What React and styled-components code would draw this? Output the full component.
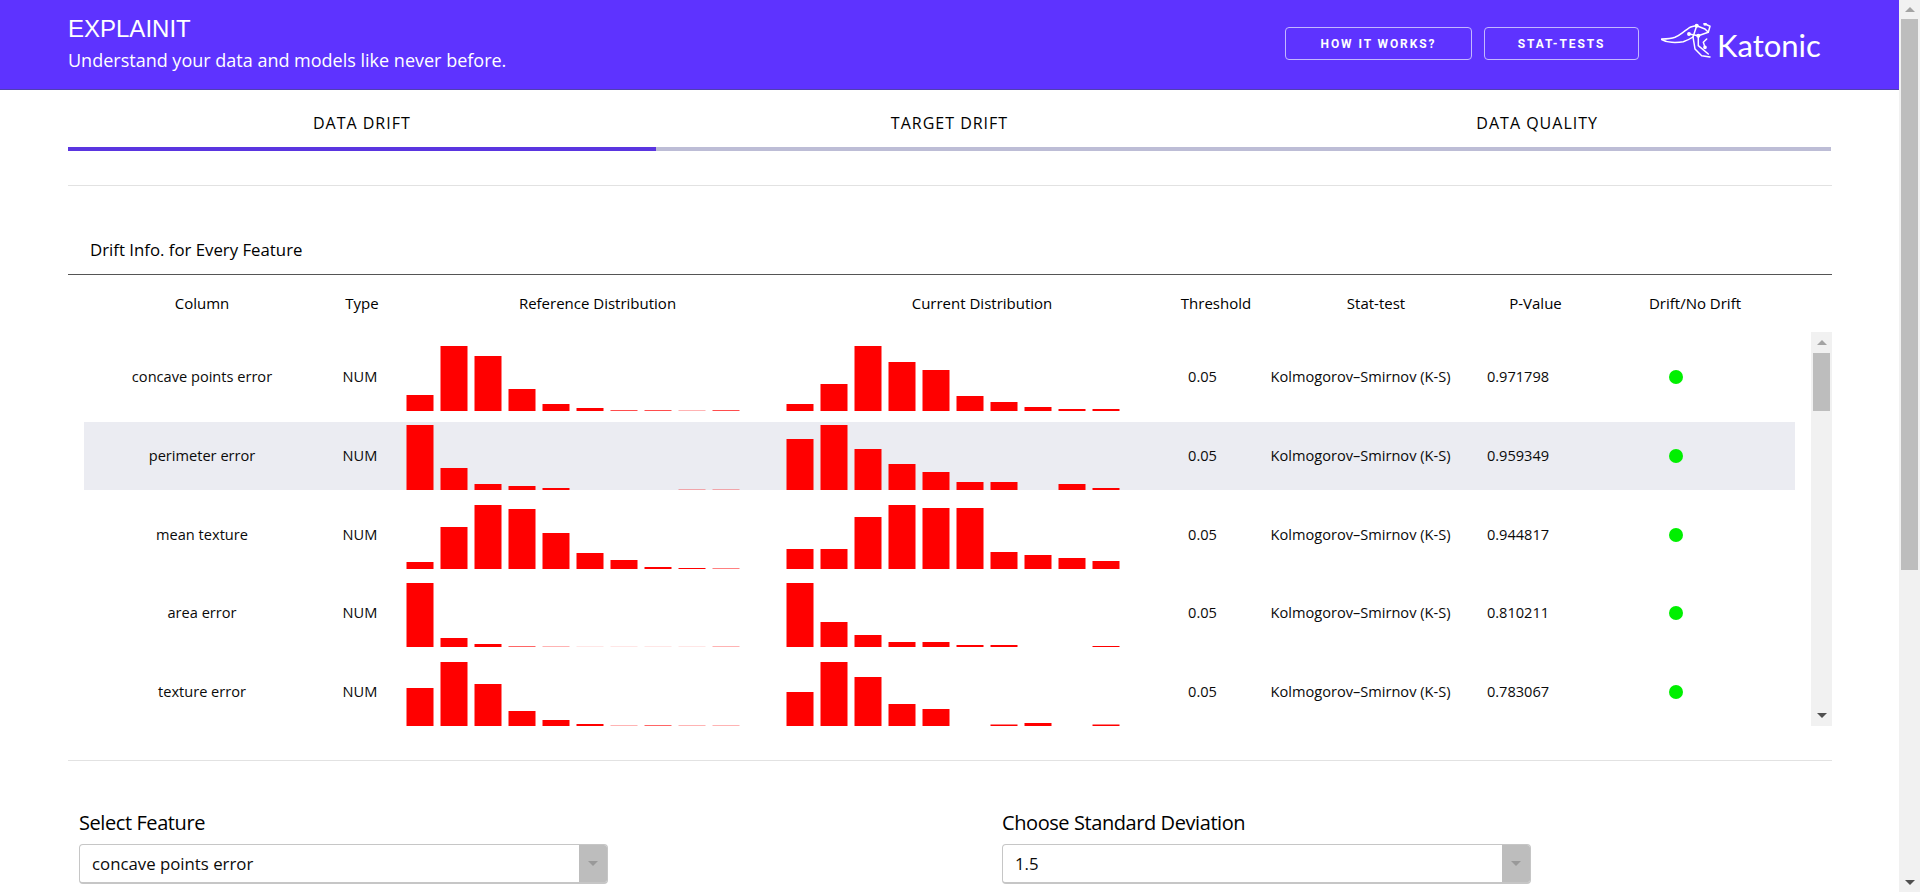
import React from "react";
import styled, { createGlobalStyle } from "styled-components";

const Global = createGlobalStyle`
  html, body { margin: 0; padding: 0; height: 100%; overflow: hidden; background: #fff; }
  * { box-sizing: border-box; }
`;

const sans = `"Open Sans", "Noto Sans", sans-serif`;
const ink = "#0a0a0a";

const Page = styled.div`
  display: flex;
  height: 892px;
  overflow: hidden;
  font-family: ${sans};
  color: ${ink};
`;
const Main = styled.main`
  flex: 1;
  min-width: 0;
`;
const Banner = styled.header`
  display: flex;
  align-items: flex-start;
  justify-content: space-between;
  height: 90px;
  padding: 0 77px 0 68px;
  background: #5e33ff;
  border-bottom: 1px solid #5040b0;
  color: #fff;
`;
const BrandText = styled.div`
  padding-top: 15px;
`;
const BrandTitle = styled.h1`
  margin: 0;
  font: 400 24px/28px "Liberation Sans", Arial, sans-serif;
`;
const BrandSub = styled.p`
  margin: 5px 0 0;
  font: 400 18px/25px ${sans};
`;
const Actions = styled.div`
  display: flex;
  align-items: flex-start;
  padding-top: 23px;
`;
const Outline = styled.button`
  width: ${(p) => p.$w}px;
  height: 33px;
  margin: 4px 12px 0 0;
  padding: 0;
  background: transparent;
  border: 1px solid #c4b8ff;
  border-radius: 4px;
  color: #fff;
  font: 700 12px/1 Roboto, "Liberation Sans", sans-serif;
  letter-spacing: 1.9px;
`;
const Logo = styled.div`
  display: flex;
  align-items: flex-start;
  width: 162px;
  height: 35px;
  margin-left: 9px;
`;
const LogoWord = styled.span`
  margin: 7px 0 0 1px;
  font: 400 31px/30px Lato, sans-serif;
  color: #fff;
`;
const Body = styled.div`
  padding: 0 67px 0 68px;
`;
const Tabs = styled.nav`
  display: grid;
  grid-template-columns: repeat(3, 1fr);
  margin-right: 1px;
`;
const Tab = styled.div`
  height: 61px;
  padding-top: 22px;
  text-align: center;
  border-bottom: 4px solid ${(p) => (p.$active ? "#5a35e0" : "#bdbdd6")};
  font: 400 16px/22px ${sans};
  letter-spacing: 1px;
  color: #000;
`;
const Rule = styled.hr`
  height: 1px;
  margin: ${(p) => p.$m};
  border: 0;
  background: #e2e2e2;
`;
const SectionTitle = styled.h2`
  margin: 0;
  padding: 53px 0 13px 22px;
  border-bottom: 1px solid #555;
  font: 500 16.8px/22px ${sans};
  color: #000;
`;
const HeadRow = styled.div`
  display: grid;
  grid-template-columns: 268px 52px 419px 350px 118px 202px 117px 202px;
  justify-items: center;
  padding-top: 18px;
  height: 57px;
  font: 500 15px/20px ${sans};
  color: #000;
`;
const HeadCell = styled.div`
  white-space: nowrap;
`;
const Scroller = styled.div`
  display: flex;
  height: 394px;
  padding-left: 16px;
`;
const RowList = styled.div`
  width: 1711px;
  padding-top: 11px;
`;
const Row = styled.div`
  display: grid;
  grid-template-columns: 236px 80px 6px 380px 380px 73px 243px 72px 241px;
  align-items: center;
  justify-items: center;
  height: 68px;
  margin-bottom: 10.75px;
  background: ${(p) => (p.$shaded ? "#ebecf2" : "transparent")};
  font: 400 14.6px/20px ${sans};
`;
const Cell = styled.div`
  padding-bottom: 2px;
  white-space: nowrap;
`;
const ChartCell = styled.div`
  justify-self: start;
  align-self: end;
  display: flex;
`;
const Dot = styled.span`
  display: block;
  width: 14px;
  height: 14px;
  margin-left: 3px;
  border-radius: 50%;
  background: #00f000;
`;
const Track = styled.div`
  display: flex;
  flex-direction: column;
  width: 21px;
  height: ${(p) => p.$h};
  margin-left: ${(p) => p.$ml || 0};
  background: #f1f1f1;
`;
const Thumb = styled.div`
  height: ${(p) => p.$h}px;
  margin: 0 2px;
  background: #bdbdbd;
`;
const ArrowBox = styled.div`
  display: flex;
  align-items: center;
  justify-content: center;
  height: ${(p) => p.$h}px;
  margin-top: ${(p) => (p.$end ? "auto" : 0)};
`;
const Triangle = styled.span`
  width: 0;
  height: 0;
  border-left: 5px solid transparent;
  border-right: 5px solid transparent;
  ${(p) => (p.$up ? "border-bottom" : "border-top")}: 5px solid ${(p) => p.$c};
`;
const Controls = styled.div`
  display: grid;
  grid-template-columns: 529px 529px;
  column-gap: 394px;
  padding: 48px 0 0 11px;
`;
const Label = styled.label`
  display: block;
  font: 500 20px/27px ${sans};
  letter-spacing: -0.42px;
  color: #000;
`;
const SelectBox = styled.div`
  display: flex;
  align-items: stretch;
  height: 40px;
  margin-top: 8px;
  border: 1px solid #c6c6c6;
  border-bottom-width: 2px;
  border-radius: 4px;
  overflow: hidden;
  font: 400 16.8px/37px ${sans};
`;
const SelectValue = styled.div`
  flex: 1;
  padding-left: 12px;
`;
const SelectArrow = styled.div`
  display: flex;
  align-items: center;
  justify-content: center;
  width: 28px;
  background: #bdbdbd;
`;

function Bars({ values }) {
  return (
    <svg width="334" height="65" viewBox="0 0 334 65" aria-hidden="true">
      {values.map((v, i) =>
        v > 0 ? <rect key={i} x={i * 34 + 0.5} y={65 - v} width="27" height={v} fill="#ff0000" /> : null
      )}
    </svg>
  );
}

function Roo() {
  return (
    <svg width="56" height="36" viewBox="0 0 56 36" fill="none" stroke="#fff" strokeWidth="1.5" strokeLinecap="round" strokeLinejoin="round" aria-hidden="true">
      <path d="M1.7 16 C7 16 12 15.5 15 14.3 C18 13 20 11.5 23 9.3 C26 7 28 5.5 30 4.3 C33 3 35 2.5 36.7 2.7 L45 6 L48.3 9.3" />
      <path d="M1.7 16.5 C5 18.5 8 19.3 11.7 19.3 C16 19.5 20 19.3 23.3 18.7 C27 17.5 30 16 33 14" />
      <path d="M36.7 2.7 L33 14 L35 26 L41.7 32.7 L50 34" />
      <path d="M38.3 12.7 L38.3 22.7 L48.3 31" />
      <path d="M29 11 L38.3 12.7 L48.3 9.3 L50 3.3 L45 1" />
      <path d="M46.7 16 L43.3 19.3 L45 24.3" />
      <circle cx="36.7" cy="2.7" r="1.3" fill="#fff" />
      <circle cx="45" cy="1" r="1" fill="#fff" />
      <circle cx="38.3" cy="12.7" r="1.3" fill="#fff" />
      <circle cx="29" cy="11" r="1.2" fill="#fff" />
      <circle cx="45" cy="24.3" r="1.1" fill="#fff" />
    </svg>
  );
}

const columns = ["Column", "Type", "Reference Distribution", "Current Distribution", "Threshold", "Stat-test", "P-Value", "Drift/No Drift"];

const features = [
  {
    name: "concave points error",
    p: "0.971798",
    ref: [16, 65, 55, 22, 7, 3, 0.7, 0.7, 0.3, 0.7],
    cur: [7, 27, 65, 49, 41, 15, 9, 4, 2, 2],
  },
  {
    name: "perimeter error",
    p: "0.959349",
    ref: [65, 22, 6, 4, 2, 0, 0, 0, 0.3, 0.3],
    cur: [51, 65, 41, 26, 18, 8, 8, 0, 6, 2],
  },
  {
    name: "mean texture",
    p: "0.944817",
    ref: [7, 42, 64, 60, 36, 16, 9, 2, 1, 0.5],
    cur: [20, 20, 52, 64, 61, 61, 17, 14, 11, 8],
  },
  {
    name: "area error",
    p: "0.810211",
    ref: [64, 9, 3, 0.6, 0.3, 0.1, 0.1, 0.1, 0.1, 0.3],
    cur: [64, 25, 12, 5, 5, 2, 2, 0, 0, 1],
  },
  {
    name: "texture error",
    p: "0.783067",
    ref: [38, 64, 42, 15, 6, 2, 0.3, 0.6, 0.3, 0.3],
    cur: [34, 64, 49, 22, 17, 0, 1.5, 3, 0, 1.5],
  },
];

export default function App() {
  return (
    <Page>
      <Global />
      <Main>
        <Banner>
          <BrandText>
            <BrandTitle>EXPLAINIT</BrandTitle>
            <BrandSub>Understand your data and models like never before.</BrandSub>
          </BrandText>
          <Actions>
            <Outline $w={187}>HOW IT WORKS?</Outline>
            <Outline $w={155}>STAT-TESTS</Outline>
            <Logo>
              <Roo />
              <LogoWord>Katonic</LogoWord>
            </Logo>
          </Actions>
        </Banner>
        <Body>
          <Tabs>
            <Tab $active>DATA DRIFT</Tab>
            <Tab>TARGET DRIFT</Tab>
            <Tab>DATA QUALITY</Tab>
          </Tabs>
          <Rule $m="34px 0 0" />
          <SectionTitle>Drift Info. for Every Feature</SectionTitle>
          <HeadRow>
            {columns.map((c) => (
              <HeadCell key={c}>{c}</HeadCell>
            ))}
          </HeadRow>
          <Scroller>
            <RowList>
              {features.map((f, i) => (
                <Row key={f.name} $shaded={i === 1}>
                  <Cell>{f.name}</Cell>
                  <Cell>NUM</Cell>
                  <span />
                  <ChartCell>
                    <Bars values={f.ref} />
                  </ChartCell>
                  <ChartCell>
                    <Bars values={f.cur} />
                  </ChartCell>
                  <Cell>0.05</Cell>
                  <Cell>Kolmogorov–Smirnov (K-S)</Cell>
                  <Cell>{f.p}</Cell>
                  <Dot />
                </Row>
              ))}
            </RowList>
            <Track $h="394px" $ml="16px">
              <ArrowBox $h={21}>
                <Triangle $up $c="#a3a3a3" />
              </ArrowBox>
              <Thumb $h={58} />
              <ArrowBox $h={21} $end>
                <Triangle $c="#505050" />
              </ArrowBox>
            </Track>
          </Scroller>
          <Rule $m="34px 0 0" />
          <Controls>
            <div>
              <Label>Select Feature</Label>
              <SelectBox>
                <SelectValue>concave points error</SelectValue>
                <SelectArrow>
                  <Triangle $c="#999" />
                </SelectArrow>
              </SelectBox>
            </div>
            <div>
              <Label>Choose Standard Deviation</Label>
              <SelectBox>
                <SelectValue>1.5</SelectValue>
                <SelectArrow>
                  <Triangle $c="#999" />
                </SelectArrow>
              </SelectBox>
            </div>
          </Controls>
        </Body>
      </Main>
      <Track $h="892px">
        <ArrowBox $h={19}>
          <Triangle $up $c="#a3a3a3" />
        </ArrowBox>
        <Thumb $h={551} />
        <ArrowBox $h={19} $end>
          <Triangle $c="#505050" />
        </ArrowBox>
      </Track>
    </Page>
  );
}
